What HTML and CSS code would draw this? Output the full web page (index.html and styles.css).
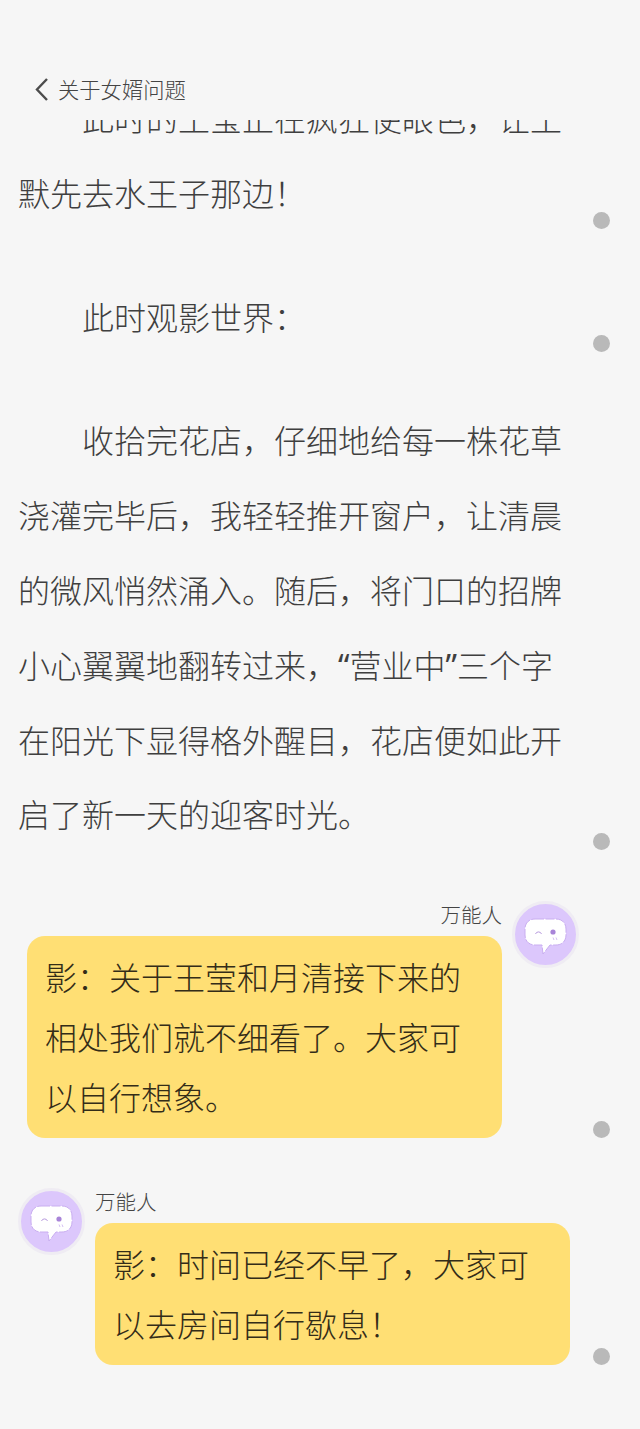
FILE: index.html
```html
<!DOCTYPE html>
<html lang="zh-CN">
<head>
    <meta charset="UTF-8">
    <meta name="viewport" content="width=device-width, initial-scale=1.0">
    <title>关于女婿问题</title>
    <link rel="stylesheet" href="styles.css">
</head>
<body>
    <header class="topbar">
        <svg class="back-icon" width="16" height="24" viewBox="0 0 16 24"><path d="M13 1 3 11.500 13 22" fill="none" stroke="#4c4c4c" stroke-width="2.400"/></svg>
        <span class="topbar-title">关于女婿问题</span>
    </header>

    <main class="content">
        <div class="row row-first">
            <p class="para">此时的王莹正在疯狂使眼色，让王默先去水王子那边！</p>
            <span class="dot"></span>
        </div>
        <div class="row">
            <p class="para">此时观影世界：</p>
            <span class="dot"></span>
        </div>
        <div class="row">
            <p class="para">收拾完花店，仔细地给每一株花草浇灌完毕后，我轻轻推开窗户，让清晨的微风悄然涌入。随后，将门口的招牌小心翼翼地翻转过来，<span class="quote">“</span>营业中<span class="quote">”</span>三个字在阳光下显得格外醒目，花店便如此开启了新一天的迎客时光。</p>
            <span class="dot"></span>
        </div>

        <div class="chat chat-right">
            <div class="chat-body">
                <div class="chat-name">万能人</div>
                <div class="bubble">影：关于王莹和月清接下来的相处我们就不细看了。大家可以自行想象。</div>
            </div>
            <div class="avatar">
                <svg width="61" height="61" viewBox="0 0 61 61">
                    <path d="M20 15h21c6 0 10 4 10 10v6c0 6-4 10-10 10h-6l-7 9-1-9h-7c-6 0-10-4-10-10v-6c0-6 4-10 10-10z" fill="#fff" stroke="#c9aef0" stroke-width="1" stroke-dasharray="9 1.500"/>
                    <path d="M20.500 30a3.200 3.200 0 0 1 6 0" fill="none" stroke="#b79ade" stroke-width="1"/>
                    <circle cx="38" cy="28" r="2.600" fill="#a884d8"/>
                    <path d="M38 33.500l1 2.500M41 33.500l1 2.500" stroke="#c9aef0" stroke-width="0.800"/>
                </svg>
            </div>
            <span class="dot"></span>
        </div>

        <div class="chat chat-left">
            <div class="avatar">
                <svg width="61" height="61" viewBox="0 0 61 61">
                    <path d="M20 15h21c6 0 10 4 10 10v6c0 6-4 10-10 10h-6l-7 9-1-9h-7c-6 0-10-4-10-10v-6c0-6 4-10 10-10z" fill="#fff" stroke="#c9aef0" stroke-width="1" stroke-dasharray="9 1.500"/>
                    <path d="M20.500 30a3.200 3.200 0 0 1 6 0" fill="none" stroke="#b79ade" stroke-width="1"/>
                    <circle cx="38" cy="28" r="2.600" fill="#a884d8"/>
                    <path d="M38 33.500l1 2.500M41 33.500l1 2.500" stroke="#c9aef0" stroke-width="0.800"/>
                </svg>
            </div>
            <div class="chat-body">
                <div class="chat-name">万能人</div>
                <div class="bubble">影：时间已经不早了，大家可以去房间自行歇息！</div>
            </div>
            <span class="dot"></span>
        </div>
    </main>
</body>
</html>
```

FILE: styles.css
```css
html, body {
    margin: 0;
    padding: 0;
}
body {
    width: 640px;
    height: 1429px;
    overflow: hidden;
    background: #f6f6f6;
    color: #3f3f3f;
    font-family: "Noto Sans", "Noto Sans CJK SC", sans-serif;
    font-weight: 300;
}
.topbar {
    display: flex;
    align-items: center;
    height: 120px;
    box-sizing: border-box;
    padding: 60px 0 0 34px;
}
.back-icon {
    margin-right: 8px;
}
.topbar-title {
    font-size: 21.300px;
    line-height: 30px;
    color: #444;
}
.content {
    height: 1309px;
    overflow: hidden;
}
.row {
    display: flex;
    align-items: flex-end;
    padding: 0 30px 0 18px;
    margin-bottom: 49px;
}
.row-first {
    margin-top: -38px;
}
.para {
    width: 544px;
    margin: 0;
    font-size: 32px;
    line-height: 74.800px;
    text-indent: 64px;
}
.quote {
    font-weight: 400;
}
.dot {
    flex: none;
    width: 17px;
    height: 17px;
    margin-left: auto;
    margin-bottom: 3px;
    border-radius: 50%;
    background: #b9b9b9;
}
.chat {
    display: flex;
    align-items: flex-start;
    gap: 10px;
    padding-right: 30px;
}
.chat .dot {
    align-self: flex-end;
    margin-bottom: 0;
}
.chat-right {
    padding-left: 27px;
    margin-top: -1px;
    margin-bottom: 50px;
}
.chat-left {
    padding-left: 18px;
}
.chat-body {
    width: 475px;
}
.chat-name {
    height: 35px;
    font-size: 20.500px;
    line-height: 29px;
    color: #444;
}
.chat-right .chat-name {
    text-align: right;
}
.bubble {
    padding: 12px 18px 10px;
    border-radius: 18px;
    background: #ffdf74;
    color: #332c18;
    font-size: 32px;
    line-height: 60px;
}
.avatar {
    flex: none;
    width: 61px;
    height: 61px;
    border: 3px solid #efecf3;
    border-radius: 50%;
    background: #dcc7fc;
}
.avatar svg {
    display: block;
}
```
